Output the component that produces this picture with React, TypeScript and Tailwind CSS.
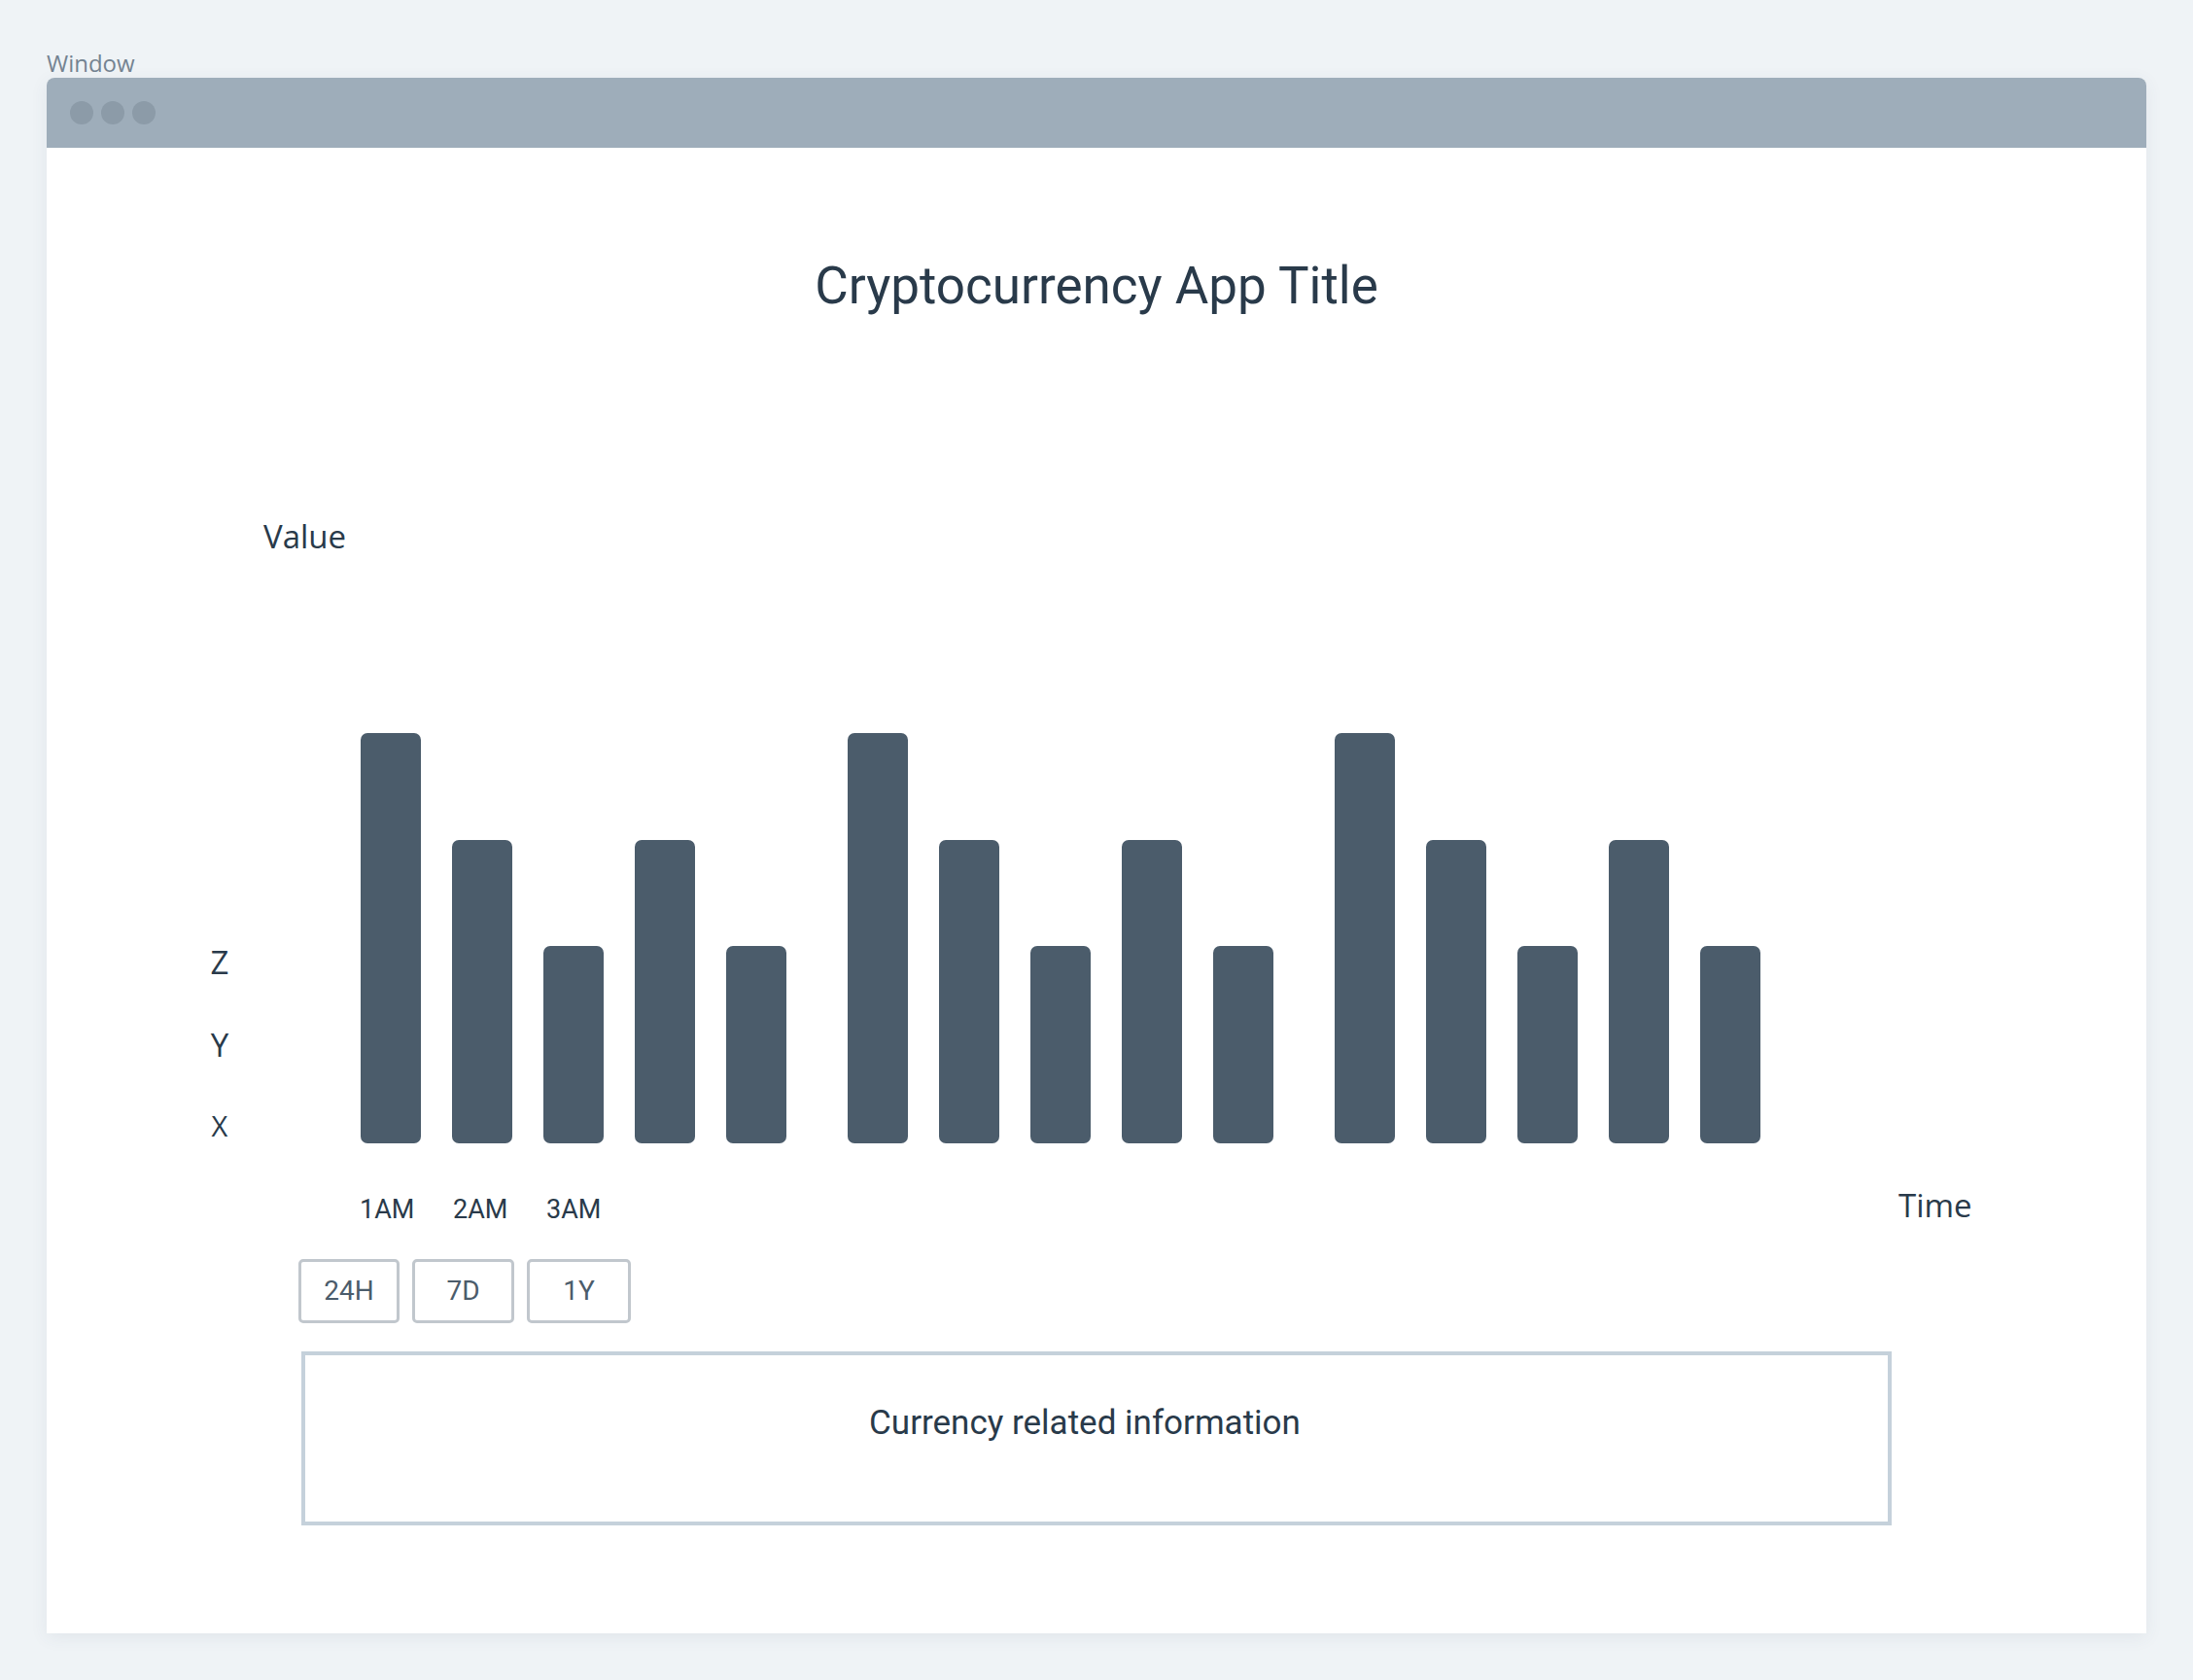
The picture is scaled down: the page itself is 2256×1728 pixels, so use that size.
const groups = [0, 1, 2];
const bars = [422, 312, 203, 312, 203];
const ticks = ["1AM", "2AM", "3AM"];
const ranges = [
  { label: "24H", w: "w-[104px]" },
  { label: "7D", w: "w-[105px]" },
  { label: "1Y", w: "w-[107px]" },
];

const din = "font-['Roboto',sans-serif]";
const sans = "font-['Open_Sans',sans-serif]";

function Bar({ h }: { h: number }) {
  return <div className="w-[62px] rounded-[7px] bg-[#4b5c6b]" style={{ height: h }} />;
}

function Chart() {
  return (
    <div className="ml-[168px] mt-[187px] flex h-[421px] items-start">
      <div className={`flex w-[20px] flex-col items-center text-[#293a4a] leading-none ${sans}`}>
        <span className="mt-[218px] text-[33px]">Z</span>
        <span className="mt-[52px] text-[33px]">Y</span>
        <span className="mt-[52px] text-[29px]">X</span>
      </div>
      <div className="ml-[135px] flex h-full items-end gap-[63px]">
        {groups.map((g) => (
          <div key={g} className="flex items-end gap-[32px]">
            {bars.map((h, i) => (
              <Bar key={i} h={h} />
            ))}
          </div>
        ))}
      </div>
    </div>
  );
}

export default function App() {
  return (
    <div className="min-h-[1728px] bg-[#eff3f6] px-[48px] pt-[53px]">
      <div className={`text-[24px] leading-none text-[#748391] ${sans}`}>Window</div>
      <div className="mt-[3px] w-[2160px] rounded-t-lg bg-white shadow-[0_4px_18px_rgba(60,80,100,0.08)]">
        <div className="flex h-[72px] items-center gap-[8px] rounded-t-lg bg-[#9eadba] pl-[24px]">
          <span className="h-[24px] w-[24px] rounded-full bg-[#8c9ba8]" />
          <span className="h-[24px] w-[24px] rounded-full bg-[#8c9ba8]" />
          <span className="h-[24px] w-[24px] rounded-full bg-[#8c9ba8]" />
        </div>

        <div className="flex h-[1528px] flex-col">
          <h1 className={`mt-[116px] text-center text-[53px] leading-none font-normal text-[#293a4a] ${din}`}>
            Cryptocurrency App Title
          </h1>

          <div className={`ml-[223px] mt-[214px] text-[33px] leading-none text-[#293a4a] ${sans}`}>Value</div>

          <Chart />

          <div className="mt-[44px] flex items-start">
            <div className={`ml-[322px] mt-[11px] flex text-[27px] leading-none text-[#293a4a] ${din}`}>
              {ticks.map((t) => (
                <span key={t} className="w-[96px]">
                  {t}
                </span>
              ))}
            </div>
            <div className={`ml-[1295px] mt-[3px] text-[33px] leading-none text-[#293a4a] ${sans}`}>Time</div>
          </div>

          <div className="ml-[259px] mt-[37px] flex gap-[13px]">
            {ranges.map((r) => (
              <button
                key={r.label}
                className={`${r.w} flex h-[66px] items-center justify-center rounded-[5px] border-[3px] border-[#c1c7cd] bg-white text-[28px] leading-none text-[#4b5c6b] ${din}`}
              >
                {r.label}
              </button>
            ))}
          </div>

          <div className="ml-[262px] mt-[29px] h-[179px] w-[1636px] border-[4px] border-[#c5d1db] pr-[24px] pt-[52px]">
            <p className={`text-center text-[35px] leading-none text-[#293a4a] ${din}`}>
              Currency related information
            </p>
          </div>
        </div>
      </div>
    </div>
  );
}
